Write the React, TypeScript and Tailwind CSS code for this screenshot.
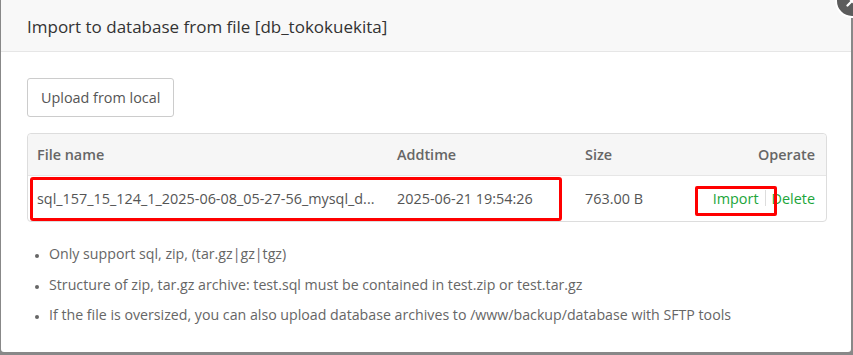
import { X } from 'lucide-react';

const notes = [
  'Only support sql, zip, (tar.gz|gz|tgz)',
  'Structure of zip, tar.gz archive: test.sql must be contained in test.zip or test.tar.gz',
  'If the file is oversized, you can also upload database archives to /www/backup/database with SFTP tools',
];

export default function App() {
  return (
    <div className="h-[355px] w-[853px] overflow-hidden bg-[#888888] pl-px font-['Open_Sans',sans-serif]">
      <div className="relative h-[352px] w-[850px] rounded-b-[3px] bg-white">
        <div className="flex h-[52px] items-center border-b border-[#e6e6e6] bg-[#f8f8f8] px-[26px] pt-[3px] text-[17px] text-[#333]">
          Import to database from file [db_tokokuekita]
        </div>

        <button className="absolute -right-[18px] -top-[16px] flex h-[34px] w-[34px] items-center justify-center rounded-full border-2 border-white bg-[#5c5c5c] text-white">
          <X size={18} strokeWidth={3} />
        </button>

        <div className="px-[26px] pt-[26px]">
          <button className="h-[39px] rounded-[3px] border border-[#cccccc] bg-white px-[13px] text-[14.4px] text-[#555]">
            Upload from local
          </button>

          <div className="relative mt-[16px] w-[800px] rounded-[4px] border border-[#dddddd] text-[14.4px] text-[#555]">
            <div className="flex h-[42px] items-center rounded-t-[4px] border-b border-[#e6e6e6] bg-[#f6f6f6] pl-[9px] pr-[11px] font-semibold text-[#666]">
              <div className="w-[360px]">File name</div>
              <div className="w-[188px]">Addtime</div>
              <div className="flex-1">Size</div>
              <div>Operate</div>
            </div>
            <div className="relative flex h-[45px] items-center pl-[9px] pr-[11px]">
              <div className="absolute left-[2px] top-[1px] h-[44px] w-[532px] rounded-[3px] border-[3px] border-[#ff0000]" />
              <div className="absolute left-[667px] top-[10px] h-[30px] w-[82px] rounded-[2px] border-[3px] border-[#ff0000]" />
              <div className="w-[360px]">sql_157_15_124_1_2025-06-08_05-27-56_mysql_d...</div>
              <div className="w-[188px]">2025-06-21 19:54:26</div>
              <div className="flex-1">763.00 B</div>
              <div className="flex items-center text-[#20a53a]">
                <span>Import</span>
                <span className="ml-[6px] mr-[6px] h-[16px] w-px bg-[#dddddd]" />
                <span>Delete</span>
              </div>
            </div>
          </div>

          <ul className="mt-[22px] list-disc space-y-[10.5px] pl-[22px] text-[14.2px] leading-[20px] text-[#666] marker:text-[10px]">
            {notes.map((n) => (
              <li key={n}>{n}</li>
            ))}
          </ul>
        </div>
      </div>
    </div>
  );
}
